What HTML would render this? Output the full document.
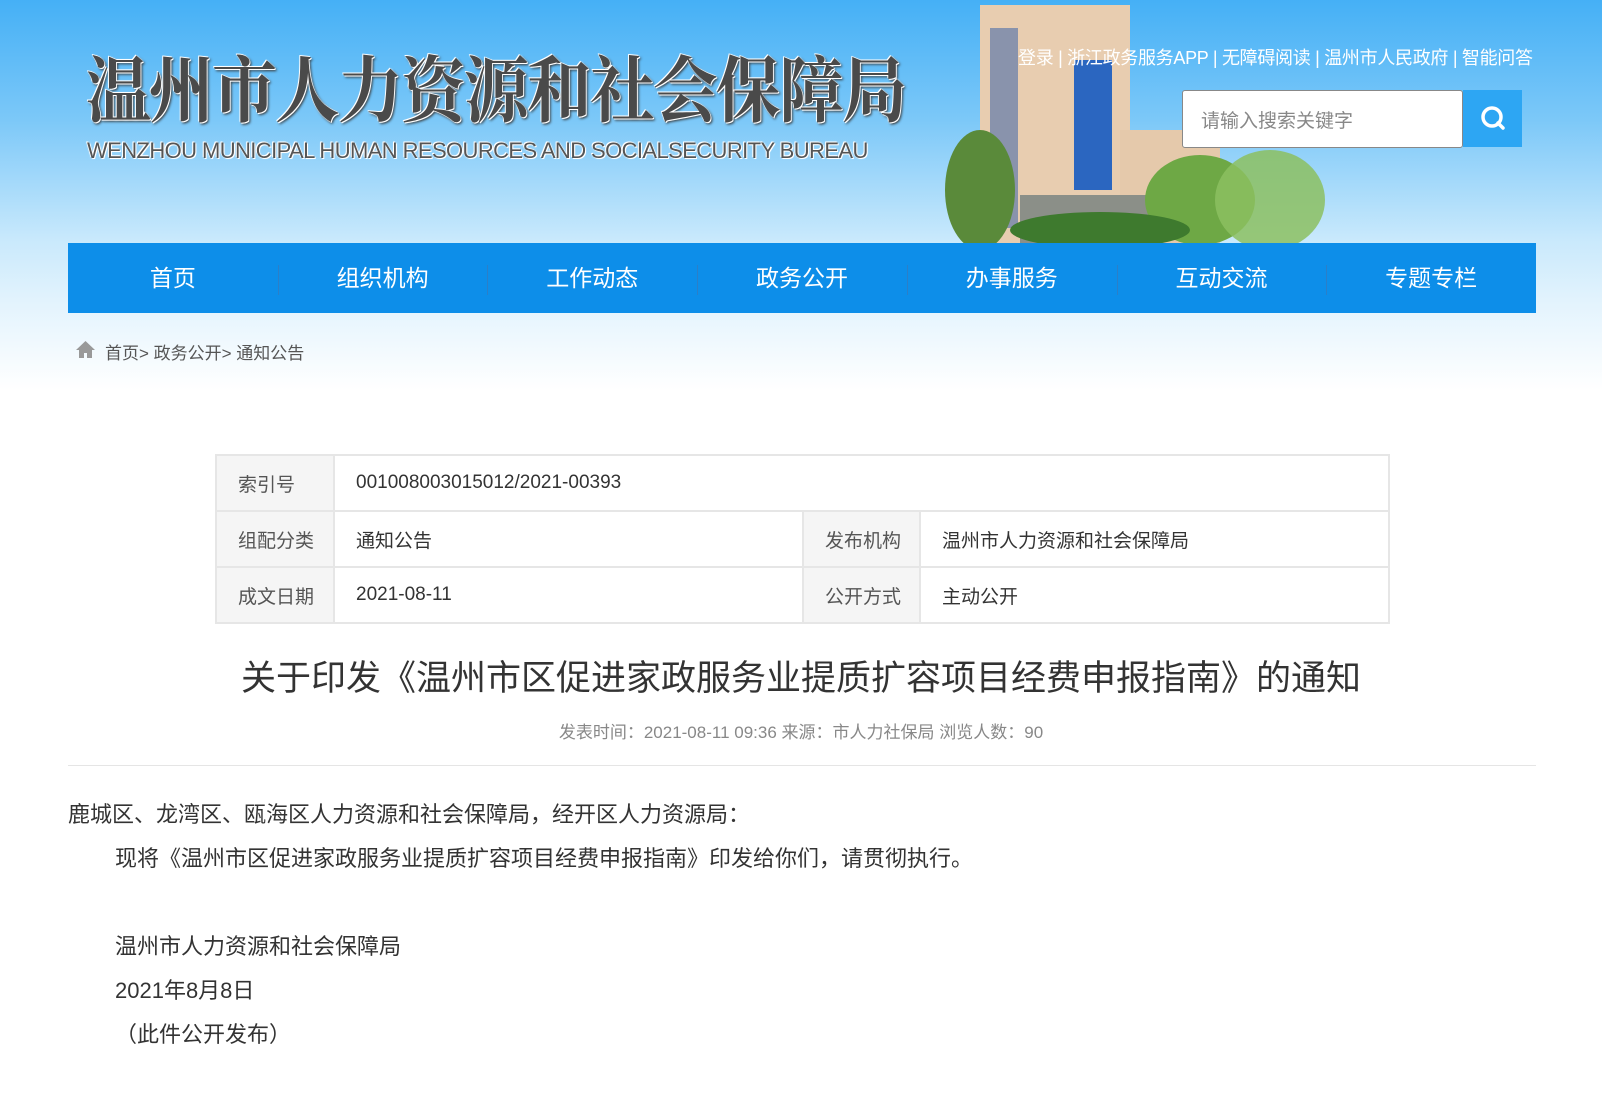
<!DOCTYPE html>
<html><head><meta charset="utf-8"><style>
*{margin:0;padding:0;box-sizing:border-box}
body{width:1602px;height:1103px;overflow:hidden;background:#fff;font-family:"Liberation Sans","Noto Sans CJK SC",sans-serif;position:relative;color:#333}
.hdr{position:absolute;left:0;top:0;width:1602px;height:390px;background:linear-gradient(#45b0f6 0px,#7cc8f8 120px,#c9e9fc 240px,#e2f3fd 300px,#ffffff 390px)}
.logo{position:absolute;left:86px;top:40px;font-size:72px;line-height:90px;font-weight:bold;color:#4a4a4a;letter-spacing:-2px;text-shadow:0 0 2px #fff,1px 1px 0 #fff,-1px -1px 0 #fff,2px 2px 3px #333;font-family:"Noto Serif CJK SC","Noto Sans CJK SC",sans-serif;white-space:nowrap;transform:scaleX(0.9);transform-origin:left}
.en{position:absolute;left:87px;top:138px;font-size:22px;color:#555;letter-spacing:-0.6px;text-shadow:0 0 2px #fff,1px 1px 0 #fff,-1px -1px 0 #fff;white-space:nowrap}
.top{position:absolute;left:1018px;top:44px;font-size:18px;color:#fff;white-space:nowrap;letter-spacing:-0.3px}
.search{position:absolute;left:1182px;top:90px;width:281px;height:58px;background:#fff;border:1px solid #888;border-radius:3px;font-size:19px;color:#888;padding:15px 0 0 18px}
.sbtn{position:absolute;left:1463px;top:90px;width:59px;height:57px;background:#2da6f3}
.nav{position:absolute;left:68px;top:243px;width:1468px;height:70px;background:#0d8ee9;display:flex}
.nav div{flex:1;text-align:center;color:#fff;font-size:23px;line-height:70px;position:relative}
.nav div+div:before{content:"";position:absolute;left:0;top:22px;height:30px;width:1px;background:#2b7fc8}
.bc{position:absolute;left:105px;top:339px;font-size:17px;color:#555}
table{position:absolute;left:215px;top:454px;width:1175px;border-collapse:collapse;font-size:19px}
td{border:2px solid #e6e6e6;height:56px;padding-left:21px;color:#333}
td.l{background:#f5f5f5;color:#555}
h1{position:absolute;left:0;width:1602px;top:650px;text-align:center;font-weight:normal;font-size:35px;color:#333}
.meta{position:absolute;left:0;width:1602px;top:718px;text-align:center;font-size:17px;color:#888}
.hr{position:absolute;left:68px;top:765px;width:1468px;height:1px;background:#e5e5e5}
.p{position:absolute;font-size:22px;color:#333;white-space:nowrap}
</style></head><body>
<div class="hdr"></div>
<svg style="position:absolute;left:940px;top:0" width="420" height="243">
<rect x="40" y="5" width="150" height="238" fill="#e8cdb0"/>
<rect x="100" y="15" width="90" height="20" fill="#e8cdb0"/>
<rect x="134" y="60" width="38" height="130" fill="#2b66c0"/>
<rect x="50" y="28" width="28" height="200" fill="#2a5aa8" opacity=".5"/>
<rect x="180" y="130" width="100" height="113" fill="#e5c9ab"/>
<rect x="80" y="195" width="140" height="48" fill="#8b8f88"/>
<ellipse cx="40" cy="190" rx="35" ry="60" fill="#5a8a3a"/>
<ellipse cx="260" cy="200" rx="55" ry="45" fill="#6ea845"/>
<ellipse cx="330" cy="200" rx="55" ry="50" fill="#8cc060" opacity=".85"/>
<ellipse cx="160" cy="230" rx="90" ry="18" fill="#3e7a2e"/>
</svg>
<div class="logo">温州市人力资源和社会保障局</div>
<div class="en">WENZHOU MUNICIPAL HUMAN RESOURCES AND SOCIALSECURITY BUREAU</div>
<div class="top">登录 | 浙江政务服务APP | 无障碍阅读 | 温州市人民政府 | 智能问答</div>
<div class="search">请输入搜索关键字</div>
<div class="sbtn"><svg width="59" height="57"><circle cx="29" cy="27" r="9" fill="none" stroke="#fff" stroke-width="3.5"/><path d="M35 33l5 5" stroke="#fff" stroke-width="3.5" stroke-linecap="round"/></svg></div>
<div class="nav"><div>首页</div><div>组织机构</div><div>工作动态</div><div>政务公开</div><div>办事服务</div><div>互动交流</div><div>专题专栏</div></div>
<svg style="position:absolute;left:75px;top:340px" width="21" height="19"><path d="M10.5 1L1 10h3v8h5v-5h3v5h5v-8h3z" fill="#999"/></svg>
<div class="bc">首页&gt; 政务公开&gt; 通知公告</div>
<table>
<tr><td class="l" style="width:118px">索引号</td><td colspan="3">001008003015012/2021-00393</td></tr>
<tr><td class="l">组配分类</td><td style="width:469px">通知公告</td><td class="l" style="width:117px">发布机构</td><td>温州市人力资源和社会保障局</td></tr>
<tr><td class="l">成文日期</td><td>2021-08-11</td><td class="l">公开方式</td><td>主动公开</td></tr>
</table>
<h1>关于印发《温州市区促进家政服务业提质扩容项目经费申报指南》的通知</h1>
<div class="meta">发表时间：2021-08-11 09:36 来源：市人力社保局 浏览人数：90</div>
<div class="hr"></div>
<div class="p" style="left:68px;top:797px">鹿城区、龙湾区、瓯海区人力资源和社会保障局，经开区人力资源局：</div>
<div class="p" style="left:115px;top:841px">现将《温州市区促进家政服务业提质扩容项目经费申报指南》印发给你们，请贯彻执行。</div>
<div class="p" style="left:115px;top:929px">温州市人力资源和社会保障局</div>
<div class="p" style="left:115px;top:973px">2021年8月8日</div>
<div class="p" style="left:115px;top:1017px">（此件公开发布）</div>
</body></html>
